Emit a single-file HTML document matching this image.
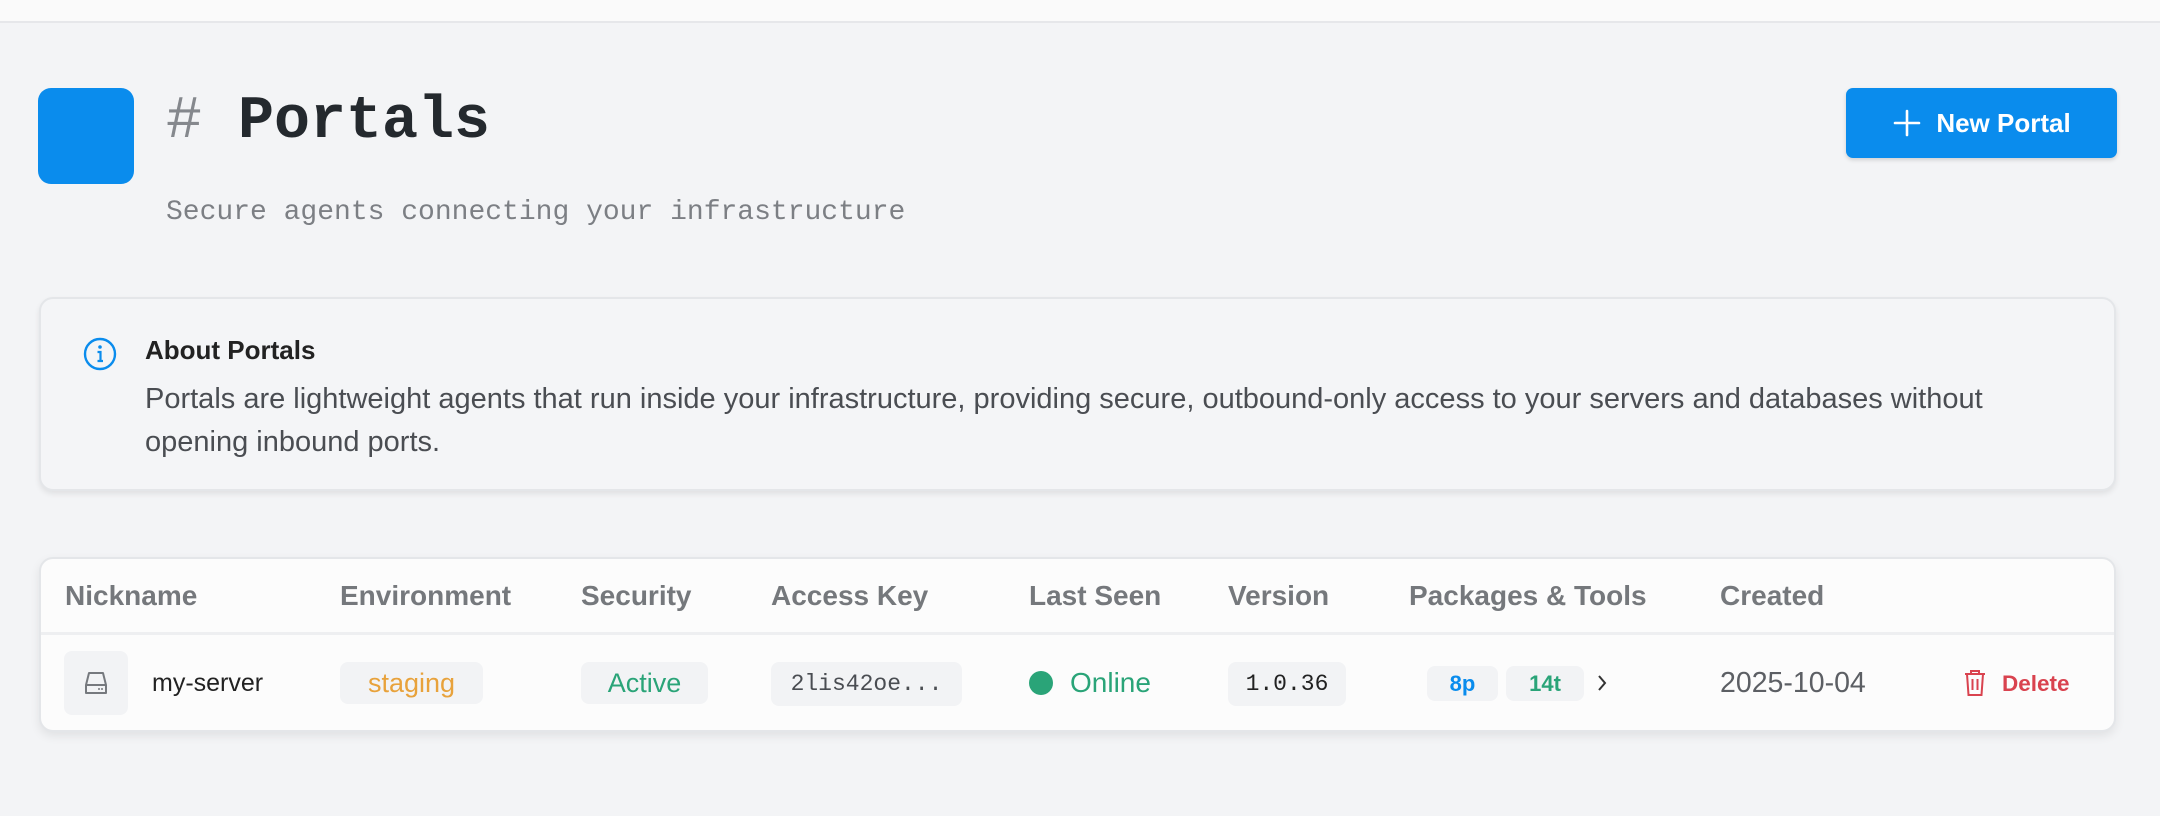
<!DOCTYPE html>
<html><head><meta charset="utf-8"><style>
*{box-sizing:border-box;margin:0;padding:0}
body{width:2160px;height:816px;background:#f3f4f6;font-family:"Liberation Sans",sans-serif;position:relative;overflow:hidden;color:#222}
.top{position:absolute;left:0;top:0;width:2160px;height:23px;background:#fafafa;border-bottom:2px solid #e6e7ea}
.abs{position:absolute}
.logo{left:38px;top:88px;width:96px;height:96px;background:#0a8ced;border-radius:13px}
.title{left:166px;top:86px;font-family:"Liberation Mono",monospace;font-weight:bold;font-size:60px;line-height:72px;color:#24292e}
.title span{color:#85888d;font-weight:normal}
.sub{left:166px;top:196px;font-family:"Liberation Mono",monospace;font-size:28px;color:#7c7f84;line-height:34px}
.btn{left:1846px;top:88px;width:271px;height:70px;background:#0a8ced;border-radius:7px;color:#fff;font-weight:bold;font-size:26px;box-shadow:0 2px 4px rgba(0,0,0,.15);display:flex;align-items:center;justify-content:center;gap:14px}
.info{left:39px;top:297px;width:2077px;height:194px;background:#f4f5f7;border:2px solid #e4e6e9;border-radius:14px;box-shadow:0 3px 6px rgba(0,0,0,.08)}
.card{left:39px;top:557px;width:2077px;height:175px;background:#fcfcfc;border:2px solid #e4e6e9;border-radius:14px;box-shadow:0 4px 10px rgba(0,0,0,.08)}
.hd{top:580px;font-size:28px;font-weight:bold;color:#75787c;line-height:32px}
.line{left:41px;top:632px;width:2073px;height:3px;background:#eeeff1}
.badge{background:#f2f3f5;border-radius:8px;display:flex;align-items:center;justify-content:center}
</style></head><body>
<div class="top"></div>
<div class="abs logo"></div>
<div class="abs title"><span>#</span> Portals</div>
<div class="abs sub">Secure agents connecting your infrastructure</div>
<div class="abs btn"><svg width="30" height="30" viewBox="0 0 30 30"><path d="M15 3V27M3 15H27" stroke="#fff" stroke-width="2.6" stroke-linecap="round"/></svg>New Portal</div>
<div class="abs info"></div>
<svg class="abs" style="left:83px;top:337px" width="34" height="34" viewBox="0 0 34 34"><circle cx="17" cy="17" r="15" fill="none" stroke="#0a8ced" stroke-width="2.4"/><circle cx="17" cy="10" r="1.8" fill="#0a8ced"/><path d="M14.5 15H17.5V24M14.5 24H20" stroke="#0a8ced" stroke-width="2.2" fill="none"/></svg>
<div class="abs" style="left:145px;top:334px;font-size:26px;font-weight:bold;color:#222;line-height:32px">About Portals</div>
<div class="abs" style="left:145px;top:378px;width:1880px;font-size:29px;color:#4a4d52;line-height:43px">Portals are lightweight agents that run inside your infrastructure, providing secure, outbound-only access to your servers and databases without opening inbound ports.</div>
<div class="abs card"></div>
<div class="abs line"></div>
<div class="abs hd" style="left:65px">Nickname</div>
<div class="abs hd" style="left:340px">Environment</div>
<div class="abs hd" style="left:581px">Security</div>
<div class="abs hd" style="left:771px">Access Key</div>
<div class="abs hd" style="left:1029px">Last Seen</div>
<div class="abs hd" style="left:1228px">Version</div>
<div class="abs hd" style="left:1409px">Packages &amp; Tools</div>
<div class="abs hd" style="left:1720px">Created</div>
<div class="abs badge" style="left:64px;top:651px;width:64px;height:64px"><svg width="30" height="28" viewBox="0 0 30 28"><path d="M5 16L8 4H22L25 16V24H5Z M5 16H25" fill="none" stroke="#76797e" stroke-width="2" stroke-linejoin="round"/><circle cx="21" cy="20" r="1" fill="#76797e"/><circle cx="18" cy="20" r="1" fill="#76797e"/></svg></div>
<div class="abs" style="left:152px;top:668px;font-size:25px;color:#222;line-height:30px">my-server</div>
<div class="abs badge" style="left:340px;top:662px;width:143px;height:42px;font-size:27px;color:#e8a23b">staging</div>
<div class="abs badge" style="left:581px;top:662px;width:127px;height:42px;font-size:27px;color:#2aa478">Active</div>
<div class="abs badge" style="left:771px;top:662px;width:191px;height:44px;font-family:'Liberation Mono',monospace;font-size:23px;color:#4a4d52">2lis42oe...</div>
<div class="abs" style="left:1029px;top:671px;width:24px;height:24px;border-radius:50%;background:#2aa478"></div>
<div class="abs" style="left:1070px;top:667px;font-size:28px;color:#2aa478;line-height:32px">Online</div>
<div class="abs badge" style="left:1228px;top:662px;width:118px;height:44px;font-family:'Liberation Mono',monospace;font-size:23px;color:#222">1.0.36</div>
<div class="abs badge" style="left:1427px;top:666px;width:71px;height:35px;font-size:22px;font-weight:bold;color:#0a8ced">8p</div>
<div class="abs badge" style="left:1506px;top:666px;width:78px;height:35px;font-size:22px;font-weight:bold;color:#2aa478">14t</div>
<svg class="abs" style="left:1596px;top:673px" width="12" height="20" viewBox="0 0 12 20"><path d="M3 3L9 10L3 17" fill="none" stroke="#333" stroke-width="2"/></svg>
<div class="abs" style="left:1720px;top:667px;font-size:28.5px;color:#5c5f64;line-height:32px">2025-10-04</div>
<svg class="abs" style="left:1962px;top:668px" width="26" height="30" viewBox="0 0 26 30"><path d="M3 6H23M9 6V3H17V6M5 6L6.5 27H19.5L21 6M10.5 11V22M15.5 11V22" fill="none" stroke="#d9434f" stroke-width="2"/></svg>
<div class="abs" style="left:2002px;top:670px;font-size:22.5px;font-weight:bold;color:#d9434f;line-height:28px">Delete</div>
</body></html>
